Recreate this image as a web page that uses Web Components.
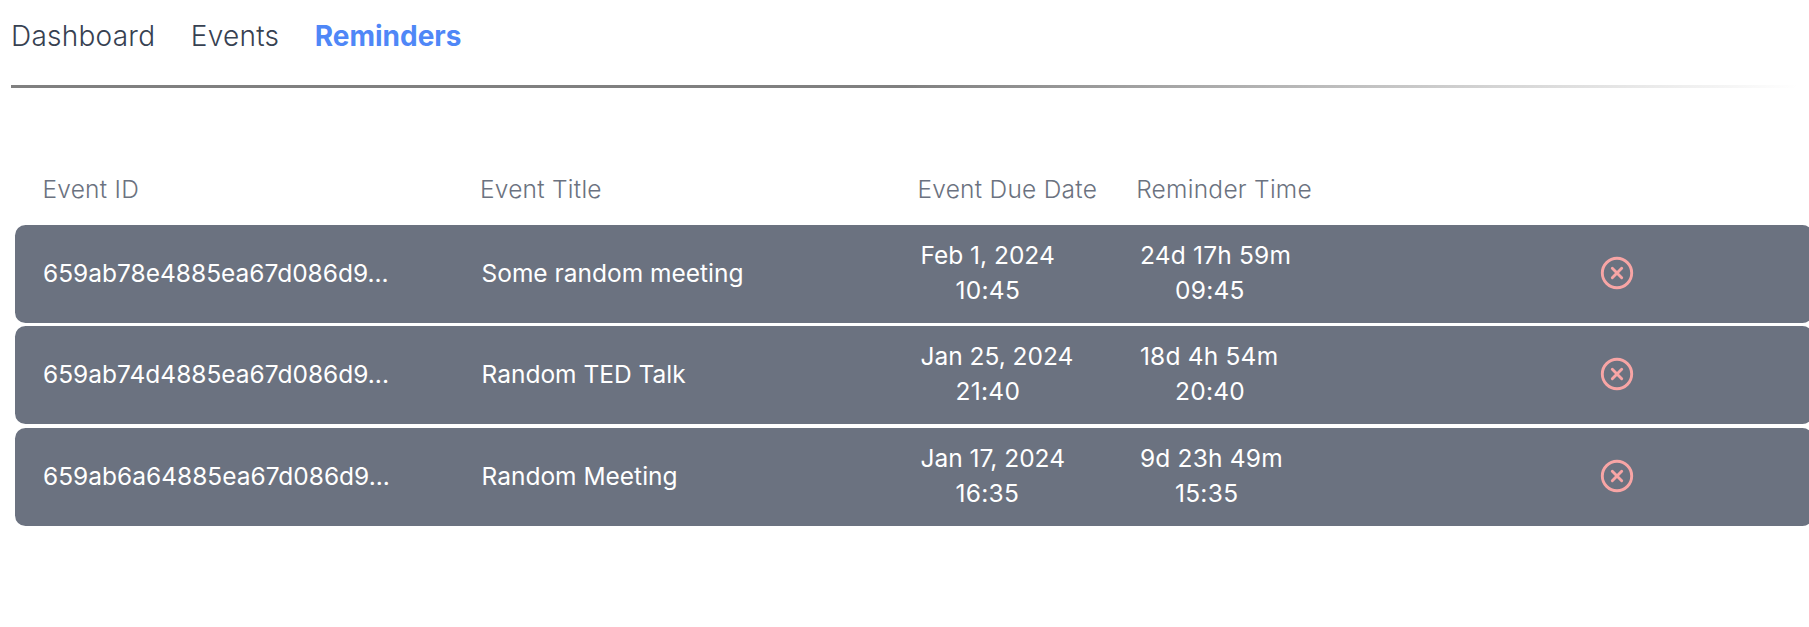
<!DOCTYPE html>
<html lang="en">
<head>
<meta charset="utf-8">
<title>Reminders</title>
<style>
body { margin: 0; background: #fff; overflow: hidden; font-family: Inter, "Liberation Sans", sans-serif; }
</style>
</head>
<body>
<reminders-page></reminders-page>
<script>
const define = (name, html, setup) => {
  const template = document.createElement('template');
  template.innerHTML = html;
  customElements.define(name, class extends HTMLElement {
    constructor() {
      super();
      this.attachShadow({ mode: 'open' }).append(template.content.cloneNode(true));
    }
    connectedCallback() { if (setup) setup(this, this.shadowRoot); }
  });
};

define('nav-tab', `
<style>
:host { display: block; font-size: 28px; line-height: 42px; font-weight: 320; color: #374151; white-space: nowrap; letter-spacing: .25px; }
:host([active]) { font-weight: 700; color: #4f87f7; letter-spacing: 0; }
</style><slot></slot>`);

define('nav-bar', `
<style>
:host { display: block; padding: 15px 11px 0; }
nav { display: flex; gap: 35.5px; height: 70px; }
.rule { height: 3px; background: linear-gradient(to right, #808080 50%, transparent); }
</style>
<nav><slot></slot></nav><div class="rule"></div>`);

define('table-head', `
<style>
:host { display: grid; grid-template-columns: 437.5px 437.5px 218.75px 218.75px; padding: 84px 0 18px 42.4px; font-size: 24.5px; line-height: 35px; font-weight: 320; letter-spacing: .26px; color: #6b7280; white-space: nowrap; }
</style><slot></slot>`);

define('close-icon', `
<style>:host { display: block; width: 34px; height: 34px; } svg { display: block; }</style>
<svg width="34" height="34" viewBox="0 0 34 34" fill="none" stroke="#f8a5a5" stroke-width="2.9" stroke-linecap="round">
<circle cx="17" cy="17" r="14.7"/><path d="M12.3 12.3l9.4 9.4M21.7 12.3l-9.4 9.4"/></svg>`);

define('reminder-row', `
<style>
:host { display: grid; grid-template-columns: 438.5px 438.9px 219.5px 219.1px 1fr; align-items: center; box-sizing: border-box; width: 1798px; height: 98px; padding: 0 0 2px 28px; border-radius: 10.5px; background: #6b7280; color: #fff; font-size: 24.5px; line-height: 35px; white-space: nowrap; }
.when { display: grid; }
.when span + span { padding-left: 35px; letter-spacing: .3px; }
.left { letter-spacing: .2px; }
close-icon { justify-self: center; margin-left: 63px; }
</style>
<span class="id"></span><span class="title"></span>
<div class="when"><span class="date"></span><span class="time"></span></div>
<div class="when"><span class="left"></span><span class="at"></span></div>
<close-icon></close-icon>`, (host, root) => {
  for (const key of ['id', 'title', 'date', 'time', 'left', 'at'])
    root.querySelector('.' + key).textContent = host.dataset[key];
});

define('reminders-page', `
<style>
:host { display: block; }
.rows { display: grid; row-gap: 3px; padding-left: 15px; }
reminder-row:last-child { margin-top: 1px; }
</style>
<nav-bar><nav-tab>Dashboard</nav-tab><nav-tab>Events</nav-tab><nav-tab active>Reminders</nav-tab></nav-bar>
<table-head><span>Event ID</span><span>Event Title</span><span>Event Due Date</span><span>Reminder Time</span></table-head>
<div class="rows">
<reminder-row data-id="659ab78e4885ea67d086d9..." data-title="Some random meeting" data-date="Feb 1, 2024" data-time="10:45" data-left="24d 17h 59m" data-at="09:45"></reminder-row>
<reminder-row data-id="659ab74d4885ea67d086d9..." data-title="Random TED Talk" data-date="Jan 25, 2024" data-time="21:40" data-left="18d 4h 54m" data-at="20:40"></reminder-row>
<reminder-row data-id="659ab6a64885ea67d086d9..." data-title="Random Meeting" data-date="Jan 17, 2024" data-time="16:35" data-left="9d 23h 49m" data-at="15:35"></reminder-row>
</div>`);
</script>
</body>
</html>
